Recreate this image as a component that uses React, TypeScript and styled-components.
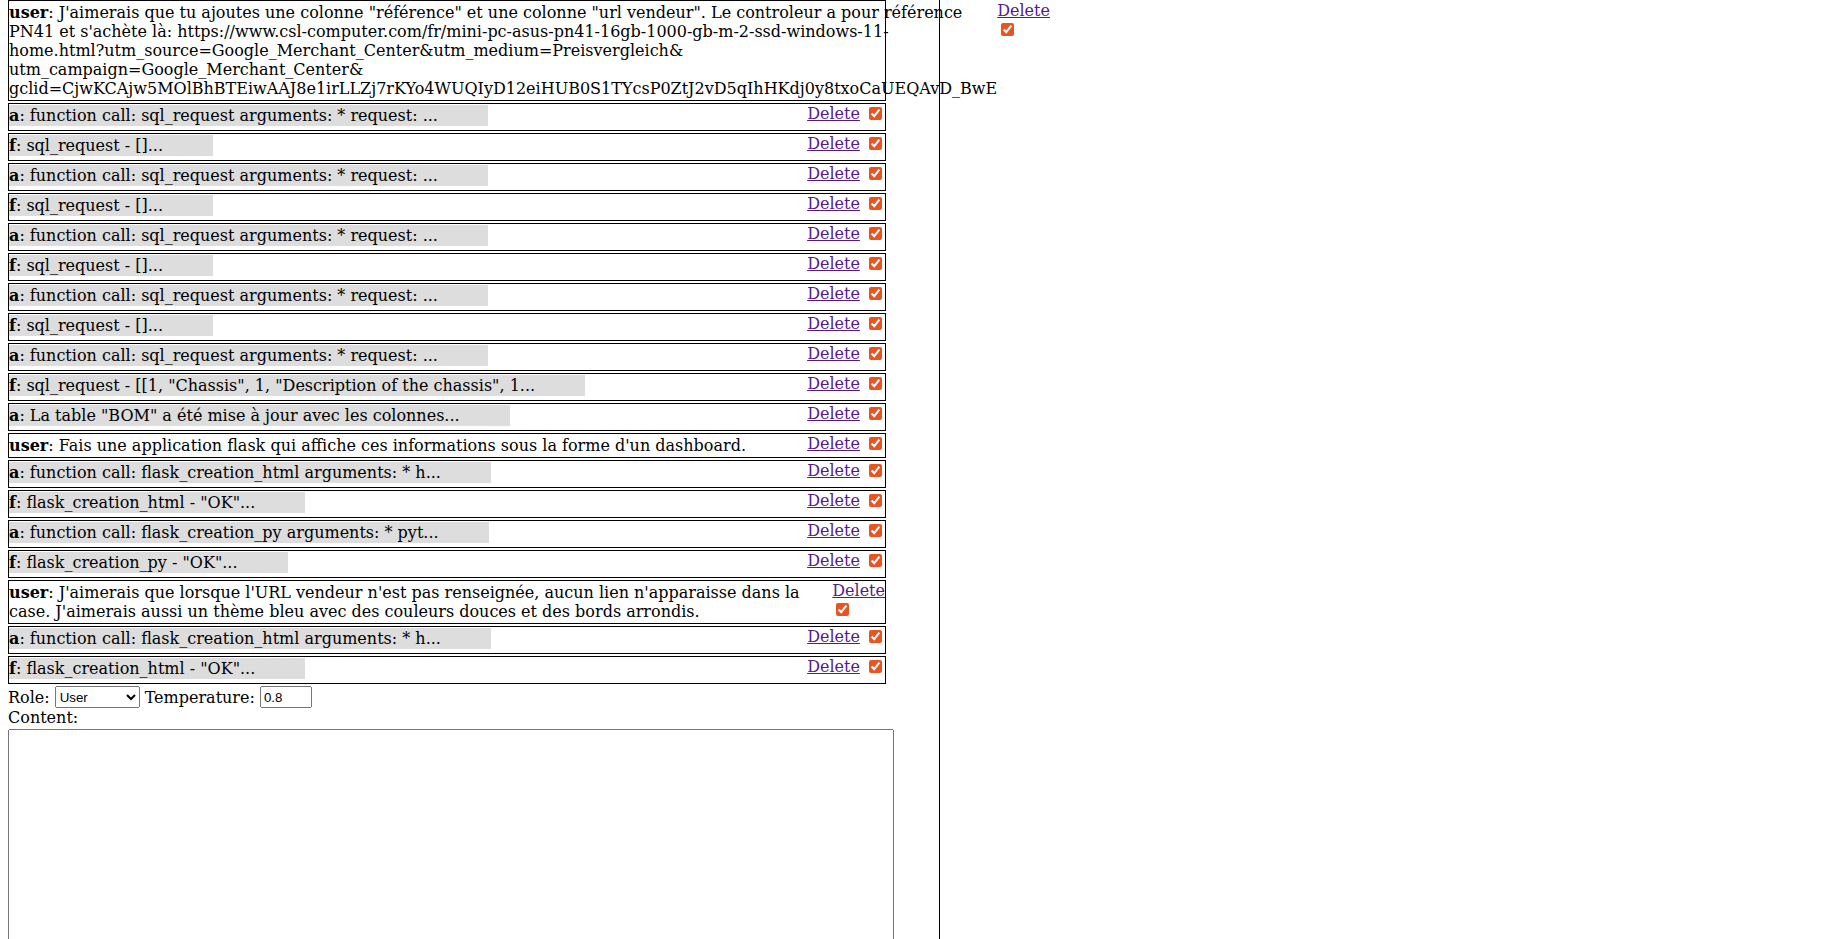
import React from 'react';
import styled, { createGlobalStyle } from 'styled-components';

const GlobalStyle = createGlobalStyle`
  body {
    margin: 0 0 0 8px;
    font-family: "DejaVu Serif", serif;
    font-size: 16px;
    color: #000;
    background: #fff;
  }
`;

const Page = styled.div`
  display: flex;
  min-height: 100vh;
`;

const LeftPanel = styled.div`
  width: 931px;
  flex: 0 0 auto;
  border-right: 1px solid #000;
`;

const RightPanel = styled.div`
  flex: 1 1 auto;
`;

const MessageBox = styled.div`
  width: 878px;
  box-sizing: border-box;
  border: 1px solid #000;
  margin-bottom: 2px;
  display: flex;
  justify-content: space-between;
  align-items: flex-start;
`;

const MessageText = styled.div<{ $collapsed?: boolean }>`
  padding: ${(p) => (p.$collapsed ? '1px 0 4px' : '2px 0')};
`;

const Collapsed = styled.span`
  display: inline-block;
  background: #ddd;
  padding: 1px 50px 1px 0;
`;

const Role = styled.b`
  font-weight: bold;
`;

const Controls = styled.div`
  text-align: left;
`;

const DeleteLink = styled.a`
  color: #551a8b;
  text-decoration: underline;
`;

const Check = styled.input`
  accent-color: #e95420;
  margin: 3px 3px 3px 4px;
  vertical-align: top;
`;

const FormRow = styled.div`
  height: 22px;
  display: flex;
  align-items: center;
  gap: 5px;
`;

const RoleSelect = styled.select`
  width: 85px;
  height: 22px;
`;

const TempInput = styled.input`
  width: 52px;
  height: 22px;
  box-sizing: border-box;
`;

const ContentLabel = styled.div`
  height: 19px;
  line-height: 19px;
`;

const ContentArea = styled.textarea`
  display: block;
  margin-top: 2px;
  width: 886px;
  height: 320px;
  box-sizing: border-box;
`;

type Msg = { role: 'user' | 'a' | 'f'; text: React.ReactNode; collapsed?: boolean };

const sqlA = 'function call: sql_request arguments: * request: ...';
const sqlF = 'sql_request - []...';

const firstRequest = (
  <>
    J'aimerais que tu ajoutes une colonne "référence" et une colonne "url vendeur". Le controleur a pour
    référence PN41 et s'achète là: https://www.csl-computer.com/fr/mini-pc-asus-pn41-16gb-1000-gb-m-2-ssd-windows-11-
    <br />
    home.html?utm_source=Google_Merchant_Center&amp;utm_medium=Preisvergleich&amp;
    <br />
    utm_campaign=Google_Merchant_Center&amp;
    <br />
    gclid=CjwKCAjw5MOlBhBTEiwAAJ8e1irLLZj7rKYo4WUQIyD12eiHUB0S1TYcsP0ZtJ2vD5qIhHKdj0y8txoCaUEQAvD_BwE
  </>
);

const messages: Msg[] = [
  { role: 'user', text: firstRequest },
  { role: 'a', text: sqlA, collapsed: true },
  { role: 'f', text: sqlF, collapsed: true },
  { role: 'a', text: sqlA, collapsed: true },
  { role: 'f', text: sqlF, collapsed: true },
  { role: 'a', text: sqlA, collapsed: true },
  { role: 'f', text: sqlF, collapsed: true },
  { role: 'a', text: sqlA, collapsed: true },
  { role: 'f', text: sqlF, collapsed: true },
  { role: 'a', text: sqlA, collapsed: true },
  { role: 'f', text: 'sql_request - [[1, "Chassis", 1, "Description of the chassis", 1...', collapsed: true },
  { role: 'a', text: 'La table "BOM" a été mise à jour avec les colonnes...', collapsed: true },
  { role: 'user', text: "Fais une application flask qui affiche ces informations sous la forme d'un dashboard." },
  { role: 'a', text: 'function call: flask_creation_html arguments: * h...', collapsed: true },
  { role: 'f', text: 'flask_creation_html - "OK"...', collapsed: true },
  { role: 'a', text: 'function call: flask_creation_py arguments: * pyt...', collapsed: true },
  { role: 'f', text: 'flask_creation_py - "OK"...', collapsed: true },
  {
    role: 'user',
    text:
      "J'aimerais que lorsque l'URL vendeur n'est pas renseignée, aucun lien n'apparaisse dans la case. J'aimerais aussi un thème bleu avec des couleurs douces et des bords arrondis.",
  },
  { role: 'a', text: 'function call: flask_creation_html arguments: * h...', collapsed: true },
  { role: 'f', text: 'flask_creation_html - "OK"...', collapsed: true },
];

const MessageRow: React.FC<{ msg: Msg }> = ({ msg }) => {
  const body = (
    <>
      <Role>{msg.role}</Role>: {msg.text}
    </>
  );
  return (
    <MessageBox>
      <MessageText $collapsed={msg.collapsed}>
        {msg.collapsed ? <Collapsed>{body}</Collapsed> : body}
      </MessageText>
      <Controls>
        <DeleteLink href="#">Delete</DeleteLink> <Check type="checkbox" defaultChecked />
      </Controls>
    </MessageBox>
  );
};

const App: React.FC = () => {
  return (
    <>
      <GlobalStyle />
      <Page>
        <LeftPanel>
          {messages.map((m, i) => (
            <MessageRow key={i} msg={m} />
          ))}
          <FormRow>
            <span>Role:</span>
            <RoleSelect defaultValue="user">
              <option value="user">User</option>
              <option value="assistant">Assistant</option>
              <option value="system">System</option>
              <option value="function">Function</option>
            </RoleSelect>
            <span>Temperature:</span>
            <TempInput type="text" defaultValue="0.8" />
          </FormRow>
          <ContentLabel>Content:</ContentLabel>
          <ContentArea />
        </LeftPanel>
        <RightPanel />
      </Page>
    </>
  );
};

export default App;
